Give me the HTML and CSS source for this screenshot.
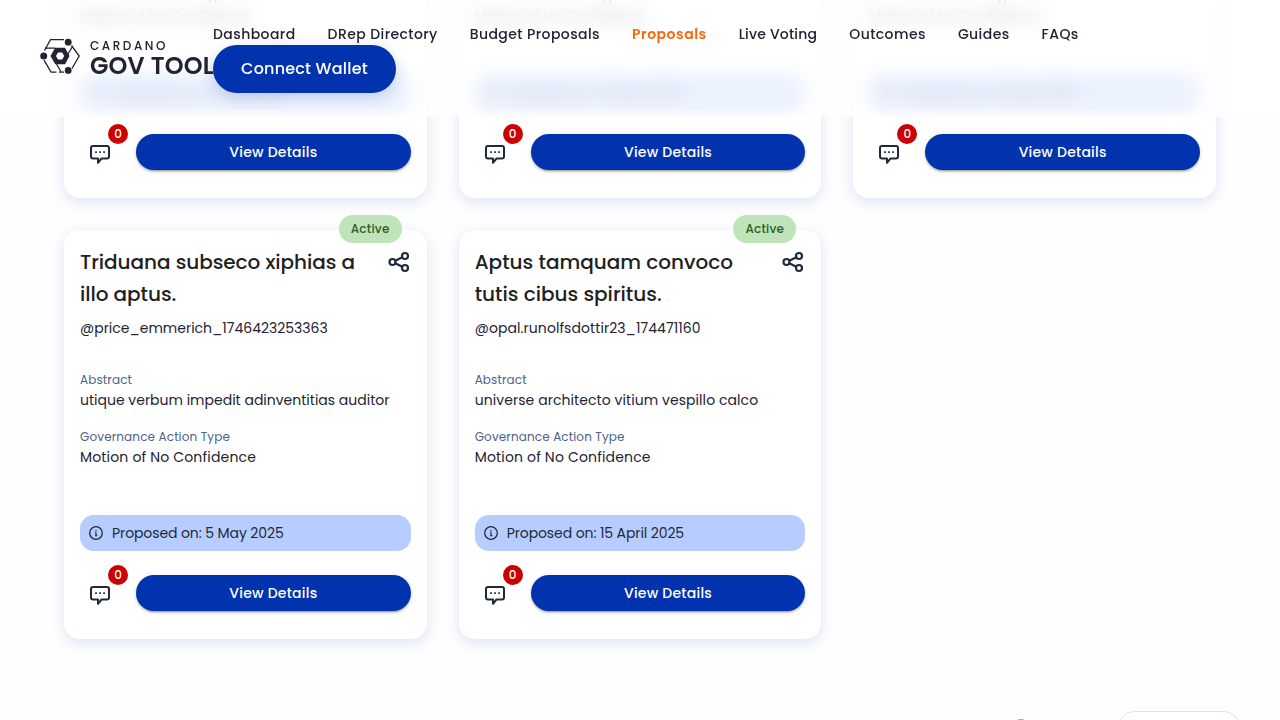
FILE: index.html
```html
<!DOCTYPE html>
<html lang="en">
<head>
<meta charset="utf-8">
<title>Cardano GovTool - Proposals</title>
<link rel="stylesheet" href="styles.css">
</head>
<body>
<svg class="sprite" aria-hidden="true">
  <symbol id="chat" viewBox="0 0 24 24">
    <path d="M5 4h14a2 2 0 0 1 2 2v8.500a2 2 0 0 1-2 2h-5.500L10 20.800v-4.300H5a2 2 0 0 1-2-2V6a2 2 0 0 1 2-2z" fill="none" stroke="#212a3d" stroke-width="2" stroke-linejoin="round"/>
    <path d="M7.200 9.200h1.700v1.700H7.200zM11.200 9.200h1.700v1.700h-1.700zM15.200 9.200h1.700v1.700h-1.700z" fill="#212a3d"/>
  </symbol>
  <symbol id="share" viewBox="0 0 24 24">
    <g fill="none" stroke="#212a3d" stroke-width="2.200">
      <circle cx="18" cy="6" r="3"/><circle cx="5.500" cy="12" r="3"/><circle cx="18" cy="18" r="3"/>
      <path d="M8.300 10.700l7-3.400M8.300 13.300l7 3.400"/>
    </g>
  </symbol>
  <symbol id="info" viewBox="0 0 16 16">
    <circle cx="8" cy="8" r="6.300" fill="none" stroke="#212a3d" stroke-width="1.300"/>
    <path d="M7.300 5h1.300v1.300H7.300zM7 7.300h1.600v3h.8v.9H7v-.9h.5V8.200H7z" fill="#212a3d"/>
  </symbol>
</svg>

<header class="header">
  <a class="logo">
    <svg class="logo-mark" viewBox="0 0 40 36">
      <g fill="none" stroke="#242232" stroke-width="1.300">
        <path d="M4.500 12.500L10.500 1.700H24"/>
        <path d="M31.500 7.500L39.200 18L32 30.500"/>
        <path d="M4 22.200L11 34.200H16.500M19 34.200H24"/>
        <path d="M5 10.200h10M32.500 8.500l-6 10M16.500 26l4.500 7.800"/>
      </g>
      <path d="M15.200 9.800h9.800L29.500 18l-4.500 8.200h-9.800L10.500 18z" fill="#242232"/>
      <path d="M18 14.400h4.200L24.200 18l-2 3.600H18L16 18z" fill="#fff"/>
      <circle cx="28.200" cy="4.200" r="3.400" fill="#242232"/>
      <circle cx="3.700" cy="18" r="3.500" fill="#242232"/>
      <circle cx="28.200" cy="32.400" r="3.400" fill="#242232"/>
    </svg>
    <span class="logo-text"><span class="logo-top">CARDANO</span><span class="logo-name">GOV TOOL</span></span>
  </a>
  <div class="header-main">
    <nav class="nav">
      <a>Dashboard</a><a>DRep Directory</a><a>Budget Proposals</a><a class="current">Proposals</a><a class="tight">Live Voting</a><a>Outcomes</a><a>Guides</a><a>FAQs</a>
    </nav>
    <button class="connect">Connect Wallet</button>
  </div>
</header>

<main class="page">
  <div class="grid">
    <article class="card">
      <div class="head"></div>
      <p class="user"></p>
      <dl><dt></dt><dd></dd><dt>Governance Action Type</dt><dd>Motion of No Confidence</dd></dl>
      <div class="date"><svg><use href="#info"/></svg>Proposed on: 13 May 2025</div>
      <div class="actions"><span class="comments"><svg class="icon"><use href="#chat"/></svg><b class="count">0</b></span><button class="view">View Details</button></div>
    </article>
    <article class="card">
      <div class="head"></div>
      <p class="user"></p>
      <dl><dt></dt><dd></dd><dt>Governance Action Type</dt><dd>Motion of No Confidence</dd></dl>
      <div class="date"><svg><use href="#info"/></svg>Proposed on: 13 May 2025</div>
      <div class="actions"><span class="comments"><svg class="icon"><use href="#chat"/></svg><b class="count">0</b></span><button class="view">View Details</button></div>
    </article>
    <article class="card">
      <div class="head"></div>
      <p class="user"></p>
      <dl><dt></dt><dd></dd><dt>Governance Action Type</dt><dd>Motion of No Confidence</dd></dl>
      <div class="date"><svg><use href="#info"/></svg>Proposed on: 13 May 2025</div>
      <div class="actions"><span class="comments"><svg class="icon"><use href="#chat"/></svg><b class="count">0</b></span><button class="view">View Details</button></div>
    </article>
    <article class="card">
      <span class="status">Active</span>
      <div class="head"><h2 class="snug">Triduana subseco xiphias a illo aptus.</h2><svg class="icon share"><use href="#share"/></svg></div>
      <p class="user">@price_emmerich_1746423253363</p>
      <dl><dt>Abstract</dt><dd>utique verbum impedit adinventitias auditor</dd><dt>Governance Action Type</dt><dd class="type">Motion of No Confidence</dd></dl>
      <div class="date"><svg><use href="#info"/></svg>Proposed on: 5 May 2025</div>
      <div class="actions"><span class="comments"><svg class="icon"><use href="#chat"/></svg><b class="count">0</b></span><button class="view">View Details</button></div>
    </article>
    <article class="card">
      <span class="status">Active</span>
      <div class="head"><h2>Aptus tamquam convoco tutis cibus spiritus.</h2><svg class="icon share"><use href="#share"/></svg></div>
      <p class="user loose">@opal.runolfsdottir23_174471160</p>
      <dl><dt>Abstract</dt><dd class="loose">universe architecto vitium vespillo calco</dd><dt>Governance Action Type</dt><dd class="type">Motion of No Confidence</dd></dl>
      <div class="date"><svg><use href="#info"/></svg>Proposed on: 15 April 2025</div>
      <div class="actions"><span class="comments"><svg class="icon"><use href="#chat"/></svg><b class="count">0</b></span><button class="view">View Details</button></div>
    </article>
  </div>
  <footer class="footer">
    <svg class="help" viewBox="0 0 20 20"><circle cx="10" cy="10" r="9" fill="none" stroke="#e0591b" stroke-width="1.500"/></svg>
    <button class="feedback" aria-label="Feedback"></button>
  </footer>
</main>
</body>
</html>
```

FILE: styles.css
```css
* { box-sizing: border-box; }
body { margin: 0; height: 720px; overflow: hidden; position: relative; background: #fefefe; color: #242232; font-family: Poppins, "Open Sans", sans-serif; font-size: 14px; }
h2, p, dl, dd { margin: 0; }
button { font-family: inherit; border: 0; padding: 0; }
.sprite { position: absolute; width: 0; height: 0; }

.header { position: absolute; z-index: 10; top: 0; left: 0; right: 0; height: 117px; padding: 24px 40px; display: flex; align-items: flex-start; background: rgba(255, 255, 255, .7); backdrop-filter: blur(10px); }
.logo { width: 173px; flex: none; display: flex; gap: 10px; padding-top: 14px; white-space: nowrap; }
.logo-mark { width: 40px; height: 36px; flex: none; }
.logo-text { display: flex; flex-direction: column; }
.logo-top { font-size: 12px; font-weight: 500; line-height: 16px; letter-spacing: 2.55px; }
.logo-name { font-size: 24px; font-weight: 600; line-height: 24px; letter-spacing: .15px; }
.nav { display: flex; gap: 32px; line-height: 21px; font-weight: 500; letter-spacing: .42px; white-space: nowrap; }
.current { color: #ff640a; font-weight: 600; letter-spacing: .5px; }
.tight { letter-spacing: .2px; }
.connect { display: block; width: 183px; height: 48px; border-radius: 24px; background: #0033ad; color: #fff; font-size: 16px; line-height: 46px; font-weight: 500; letter-spacing: .2px; box-shadow: 0 4px 15px rgba(0, 51, 173, .2); }

.page { padding: 0 64px; margin-top: -211px; }
.grid { display: grid; grid-template-columns: repeat(3, 1fr); gap: 32px; }
.card { position: relative; height: 409px; padding: 16px; border-radius: 16px; background: #fff; box-shadow: 0 4px 15px #dde3f5; display: flex; flex-direction: column; }
.status { position: absolute; top: -15px; right: 25px; width: 63px; height: 28px; border-radius: 14px; background: #c0e4ba; color: #2f5d26; font-size: 12px; line-height: 28px; font-weight: 500; text-align: center; letter-spacing: .2px; }
.head { display: flex; justify-content: space-between; height: 68px; }
.head h2 { width: 280px; color: #212121; font-size: 20px; line-height: 32px; font-weight: 500; }
.head .snug { letter-spacing: -.05px; }
.icon { width: 24px; height: 24px; }
.share { margin-top: 4px; }
.user { height: 28px; line-height: 28px; margin-bottom: 28px; }
.loose { letter-spacing: .07px; }
dl { height: 145px; }
dt { height: 20px; color: #506288; font-size: 12px; line-height: 20px; letter-spacing: .13px; }
dd { height: 21px; line-height: 21px; margin-bottom: 16px; }
.type { letter-spacing: .17px; }
.date { display: flex; align-items: center; gap: 8px; height: 36px; padding: 0 8px; border-radius: 14px; background: #b8cdff; color: #212a3d; letter-spacing: -.1px; }
.date svg { width: 16px; height: 16px; }
.actions { display: flex; gap: 16px; margin-top: 24px; }
.comments { position: relative; width: 40px; height: 40px; padding: 8px; }
.count { position: absolute; top: -10px; right: -8px; width: 20px; height: 20px; border-radius: 50%; background: #cc0000; color: #fff; font-size: 12px; line-height: 20px; font-weight: 500; text-align: center; }
.view { flex: 1; height: 36px; border-radius: 18px; background: #0033ad; color: #fff; font-size: 14px; font-weight: 500; letter-spacing: .22px; box-shadow: 0 3px 1px -2px rgba(0, 0, 0, .2), 0 2px 2px rgba(0, 0, 0, .14), 0 1px 5px rgba(0, 0, 0, .12); }

.footer { display: flex; justify-content: flex-end; gap: 87px; margin: 72px -24px 0 0; }
.help { width: 20px; height: 20px; margin-top: 8px; }
.feedback { width: 122px; height: 36px; border: 1px solid #d6e2ff; border-radius: 16px; background: #fff; }
```
